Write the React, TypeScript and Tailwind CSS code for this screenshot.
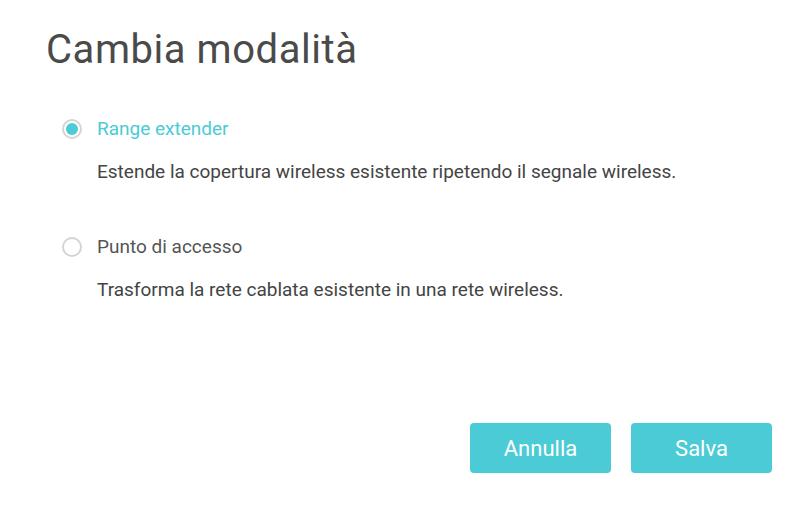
import React, { useState } from 'react';

const options = [
  {
    id: 'extender',
    label: 'Range extender',
    desc: 'Estende la copertura wireless esistente ripetendo il segnale wireless.',
  },
  {
    id: 'ap',
    label: 'Punto di accesso',
    desc: 'Trasforma la rete cablata esistente in una rete wireless.',
  },
];

export default function App() {
  const [mode, setMode] = useState('extender');

  return (
    <div className="w-[800px] h-[505px] bg-white font-['Roboto',sans-serif] flex flex-col">
      {/* titolo */}
      <h1 className="pl-[46px] pt-[25px] text-[40px] leading-[50px] text-[#4a4a4a] tracking-[0.55px]">
        Cambia modalità
      </h1>

      {/* opzioni */}
      <div className="pl-[62px] pt-[39px] flex flex-col gap-[48px]">
        {options.map((o) => {
          const active = mode === o.id;
          return (
            <div key={o.id} className="flex flex-col">
              <label
                className="flex items-center gap-[15px] cursor-pointer h-[30px]"
                onClick={() => setMode(o.id)}
              >
                <span className="w-[20px] h-[20px] rounded-full border-2 border-[#d4d4d4] flex items-center justify-center">
                  {active && <span className="w-[12px] h-[12px] rounded-full bg-[#4acbd6]" />}
                </span>
                <span className={`text-[19px] ${active ? 'text-[#4acbd6]' : 'text-[#555]'}`}>
                  {o.label}
                </span>
              </label>
              <p className="pl-[35px] pt-[16px] text-[19px] leading-[24px] text-[#444]">{o.desc}</p>
            </div>
          );
        })}
      </div>

      {/* pulsanti */}
      <div className="mt-auto mb-[32px] mr-[28px] flex justify-end gap-[20px]">
        <button className="w-[141px] h-[50px] rounded-[4px] bg-[#4acbd6] text-white text-[22px]">
          Annulla
        </button>
        <button className="w-[141px] h-[50px] rounded-[4px] bg-[#4acbd6] text-white text-[22px]">
          Salva
        </button>
      </div>
    </div>
  );
}
